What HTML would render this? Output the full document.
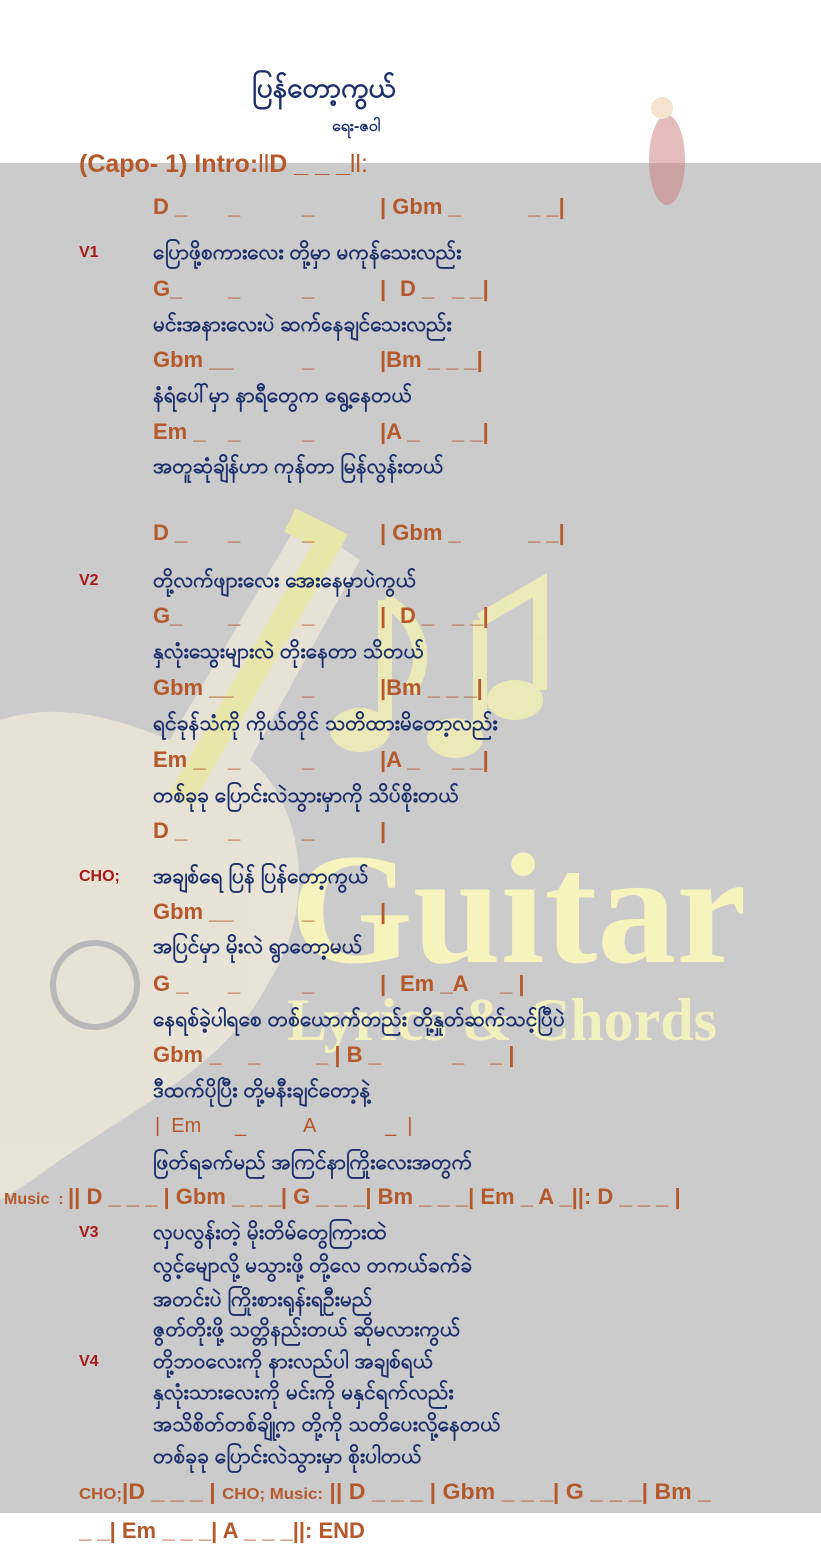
<!DOCTYPE html>
<html><head><meta charset="utf-8"><style>
body{margin:0;width:821px;height:1559px;position:relative;background:#fff;overflow:hidden;font-family:"Liberation Sans","DejaVu Sans",sans-serif}
#grey{position:absolute;left:0;top:163px;width:821px;height:1350px;background:#cbcbcb}
.r{position:absolute;left:0;height:24px;line-height:24px;white-space:pre}
.r span{position:absolute;top:0}
.c{color:#b5592c;font-weight:bold;font-size:22px}
.l{color:#1c2f6b;font-weight:bold;font-size:21px}
.v{color:#a81818;font-weight:bold;font-size:16px}
</style></head><body>
<div id="grey"></div>
<svg style="position:absolute;left:0;top:0" width="821" height="1559">
 <g opacity="0.7">
  <path d="M300 520 L360 560 L250 760 C300 800 320 900 270 980 C230 1060 150 1100 60 1160 C20 1190 0 1200 0 1200 L0 720 C60 700 120 720 170 740 Z" fill="#f3ecdc"/>
  <path d="M290 520 L330 540 L180 800" stroke="#f7f2a0" stroke-width="26" fill="none"/>
  <circle cx="95" cy="985" r="42" fill="none" stroke="#b0b0b0" stroke-width="6"/>
  <path d="M385 600 L385 720 M385 600 C420 620 430 660 410 690" stroke="#fbf7b0" stroke-width="14" fill="none"/>
  <ellipse cx="360" cy="730" rx="30" ry="22" fill="#fbf7b0"/>
  <path d="M480 620 L540 585 L540 690 M480 620 L480 730" stroke="#fbf7b0" stroke-width="14" fill="none"/>
  <ellipse cx="455" cy="738" rx="28" ry="20" fill="#fbf7b0"/>
  <ellipse cx="515" cy="700" rx="28" ry="20" fill="#fbf7b0"/>
 </g>
 <text x="290" y="962" font-family="Liberation Serif" font-weight="bold" font-size="158" fill="#f6f3bd">Guitar</text>
 <text x="287" y="1040" font-family="Liberation Serif" font-weight="bold" font-size="60" fill="#f3f0c0">Lyrics &amp; Chords</text>
 <g opacity="0.5">
 <ellipse cx="667" cy="160" rx="18" ry="45" fill="#c97a7a"/>
 <circle cx="662" cy="108" r="11" fill="#e8c9a0"/>
 </g>
</svg>

<div class="r" style="top:70px;left:252px;color:#1c2f6b;font-weight:bold;font-size:28px;height:36px;line-height:36px">ပြန်တော့ကွယ်</div>
<div class="r" style="top:115px;left:332px;color:#1c2f6b;font-weight:bold;font-size:16px">ရေး-ဇဝါ</div>
<div class="r c" style="top:152px;left:79px;font-size:25px">(Capo- 1) Intro:<span style="position:static;font-weight:normal">ll</span>D _ _ _<span style="position:static;font-weight:normal">ll:</span></div>

<div class="r c" style="top:195px"><span style="left:153px">D _</span><span style="left:228px">_</span><span style="left:302px">_</span><span style="left:380px">| Gbm _</span><span style="left:528px">_ _|</span></div>
<div class="r" style="top:241px"><span class="v" style="left:79px">V1</span><span class="l" style="left:153px">ပြောဖို့စကားလေး တို့မှာ မကုန်သေးလည်း</span></div>
<div class="r c" style="top:277px"><span style="left:153px">G_</span><span style="left:228px">_</span><span style="left:302px">_</span><span style="left:380px">|</span><span style="left:400px">D _</span><span style="left:452px">_ _|</span></div>
<div class="r l" style="top:313px;left:153px">မင်းအနားလေးပဲ ဆက်နေချင်သေးလည်း</div>
<div class="r c" style="top:348px"><span style="left:153px">Gbm __</span><span style="left:302px">_</span><span style="left:380px">|Bm _ _ _|</span></div>
<div class="r l" style="top:384px;left:153px">နံရံပေါ်မှာ နာရီတွေက ရွေ့နေတယ်</div>
<div class="r c" style="top:420px"><span style="left:153px">Em _</span><span style="left:228px">_</span><span style="left:302px">_</span><span style="left:380px">|A _</span><span style="left:452px">_ _|</span></div>
<div class="r l" style="top:455px;left:153px">အတူဆုံချိန်ဟာ ကုန်တာ မြန်လွန်းတယ်</div>

<div class="r c" style="top:521px"><span style="left:153px">D _</span><span style="left:228px">_</span><span style="left:302px">_</span><span style="left:380px">| Gbm _</span><span style="left:528px">_ _|</span></div>
<div class="r" style="top:569px"><span class="v" style="left:79px">V2</span><span class="l" style="left:153px">တို့လက်ဖျားလေး အေးနေမှာပဲကွယ်</span></div>
<div class="r c" style="top:604px"><span style="left:153px">G_</span><span style="left:228px">_</span><span style="left:302px">_</span><span style="left:380px">|</span><span style="left:400px">D _</span><span style="left:452px">_ _|</span></div>
<div class="r l" style="top:640px;left:153px">နှလုံးသွေးများလဲ တိုးနေတာ သိတယ်</div>
<div class="r c" style="top:676px"><span style="left:153px">Gbm __</span><span style="left:302px">_</span><span style="left:380px">|Bm _ _ _|</span></div>
<div class="r l" style="top:712px;left:153px">ရင်ခုန်သံကို ကိုယ်တိုင် သတိထားမိတော့လည်း</div>
<div class="r c" style="top:748px"><span style="left:153px">Em _</span><span style="left:228px">_</span><span style="left:302px">_</span><span style="left:380px">|A _</span><span style="left:452px">_ _|</span></div>
<div class="r l" style="top:784px;left:153px">တစ်ခုခု ပြောင်းလဲသွားမှာကို သိပ်စိုးတယ်</div>
<div class="r c" style="top:819px"><span style="left:153px">D _</span><span style="left:228px">_</span><span style="left:302px">_</span><span style="left:380px">|</span></div>

<div class="r" style="top:865px"><span class="v" style="left:79px">CHO;</span><span class="l" style="left:153px">အချစ်ရေ ပြန် ပြန်တော့ကွယ်</span></div>
<div class="r c" style="top:900px"><span style="left:153px">Gbm __</span><span style="left:302px">_</span><span style="left:380px">|</span></div>
<div class="r l" style="top:935px;left:153px">အပြင်မှာ မိုးလဲ ရွာတော့မယ်</div>
<div class="r c" style="top:972px"><span style="left:153px">G _</span><span style="left:228px">_</span><span style="left:302px">_</span><span style="left:380px">|</span><span style="left:400px">Em _A</span><span style="left:500px">_ |</span></div>
<div class="r l" style="top:1008px;left:153px">နေရစ်ခဲ့ပါရစေ တစ်ယောက်တည်း တို့နှုတ်ဆက်သင့်ပြီပဲ</div>
<div class="r c" style="top:1043px"><span style="left:153px">Gbm _</span><span style="left:248px">_</span><span style="left:316px">_ | B _</span><span style="left:452px">_</span><span style="left:490px">_ |</span></div>
<div class="r l" style="top:1079px;left:153px">ဒီထက်ပိုပြီး တို့မနီးချင်တော့နဲ့</div>
<div class="r c" style="top:1114px;font-weight:normal;font-size:20px"><span style="left:155px">|  Em</span><span style="left:235px">_</span><span style="left:303px">A</span><span style="left:385px">_  |</span></div>
<div class="r l" style="top:1151px;left:153px">ဖြတ်ရခက်မည် အကြင်နာကြိုးလေးအတွက်</div>

<div class="r c" style="top:1185px;left:4px"><span style="position:static;font-size:16px">Music  : </span>|| D _ _ _ | Gbm _ _ _| G _ _ _| Bm _ _ _| Em _ A _||: D _ _ _ |</div>

<div class="r" style="top:1221px"><span class="v" style="left:79px">V3</span><span class="l" style="left:153px">လှပလွန်းတဲ့ မိုးတိမ်တွေကြားထဲ</span></div>
<div class="r l" style="top:1254px;left:153px">လွင့်မျောလို့ မသွားဖို့ တို့လေ တကယ်ခက်ခဲ</div>
<div class="r l" style="top:1288px;left:153px">အတင်းပဲ ကြိုးစားရုန်းရဦးမည်</div>
<div class="r l" style="top:1318px;left:153px">ဇွတ်တိုးဖို့ သတ္တိနည်းတယ် ဆိုမလားကွယ်</div>
<div class="r" style="top:1350px"><span class="v" style="left:79px">V4</span><span class="l" style="left:153px">တို့ဘဝလေးကို နားလည်ပါ အချစ်ရယ်</span></div>
<div class="r l" style="top:1381px;left:153px">နှလုံးသားလေးကို မင်းကို မနှင်ရက်လည်း</div>
<div class="r l" style="top:1413px;left:153px">အသိစိတ်တစ်ချို့က တို့ကို သတိပေးလို့နေတယ်</div>
<div class="r l" style="top:1445px;left:153px">တစ်ခုခု ပြောင်းလဲသွားမှာ စိုးပါတယ်</div>
<div class="r c" style="top:1480px;left:79px;transform:scaleX(1.05);transform-origin:0 0"><span style="position:static;font-size:16px">CHO;</span>|D _ _ _ | <span style="position:static;font-size:16px">CHO; Music:</span> || D _ _ _ | Gbm _ _ _| G _ _ _| Bm _</div>
<div class="r c" style="top:1519px;left:79px">_ _| Em _ _ _| A _ _ _||: END</div>
</body></html>
